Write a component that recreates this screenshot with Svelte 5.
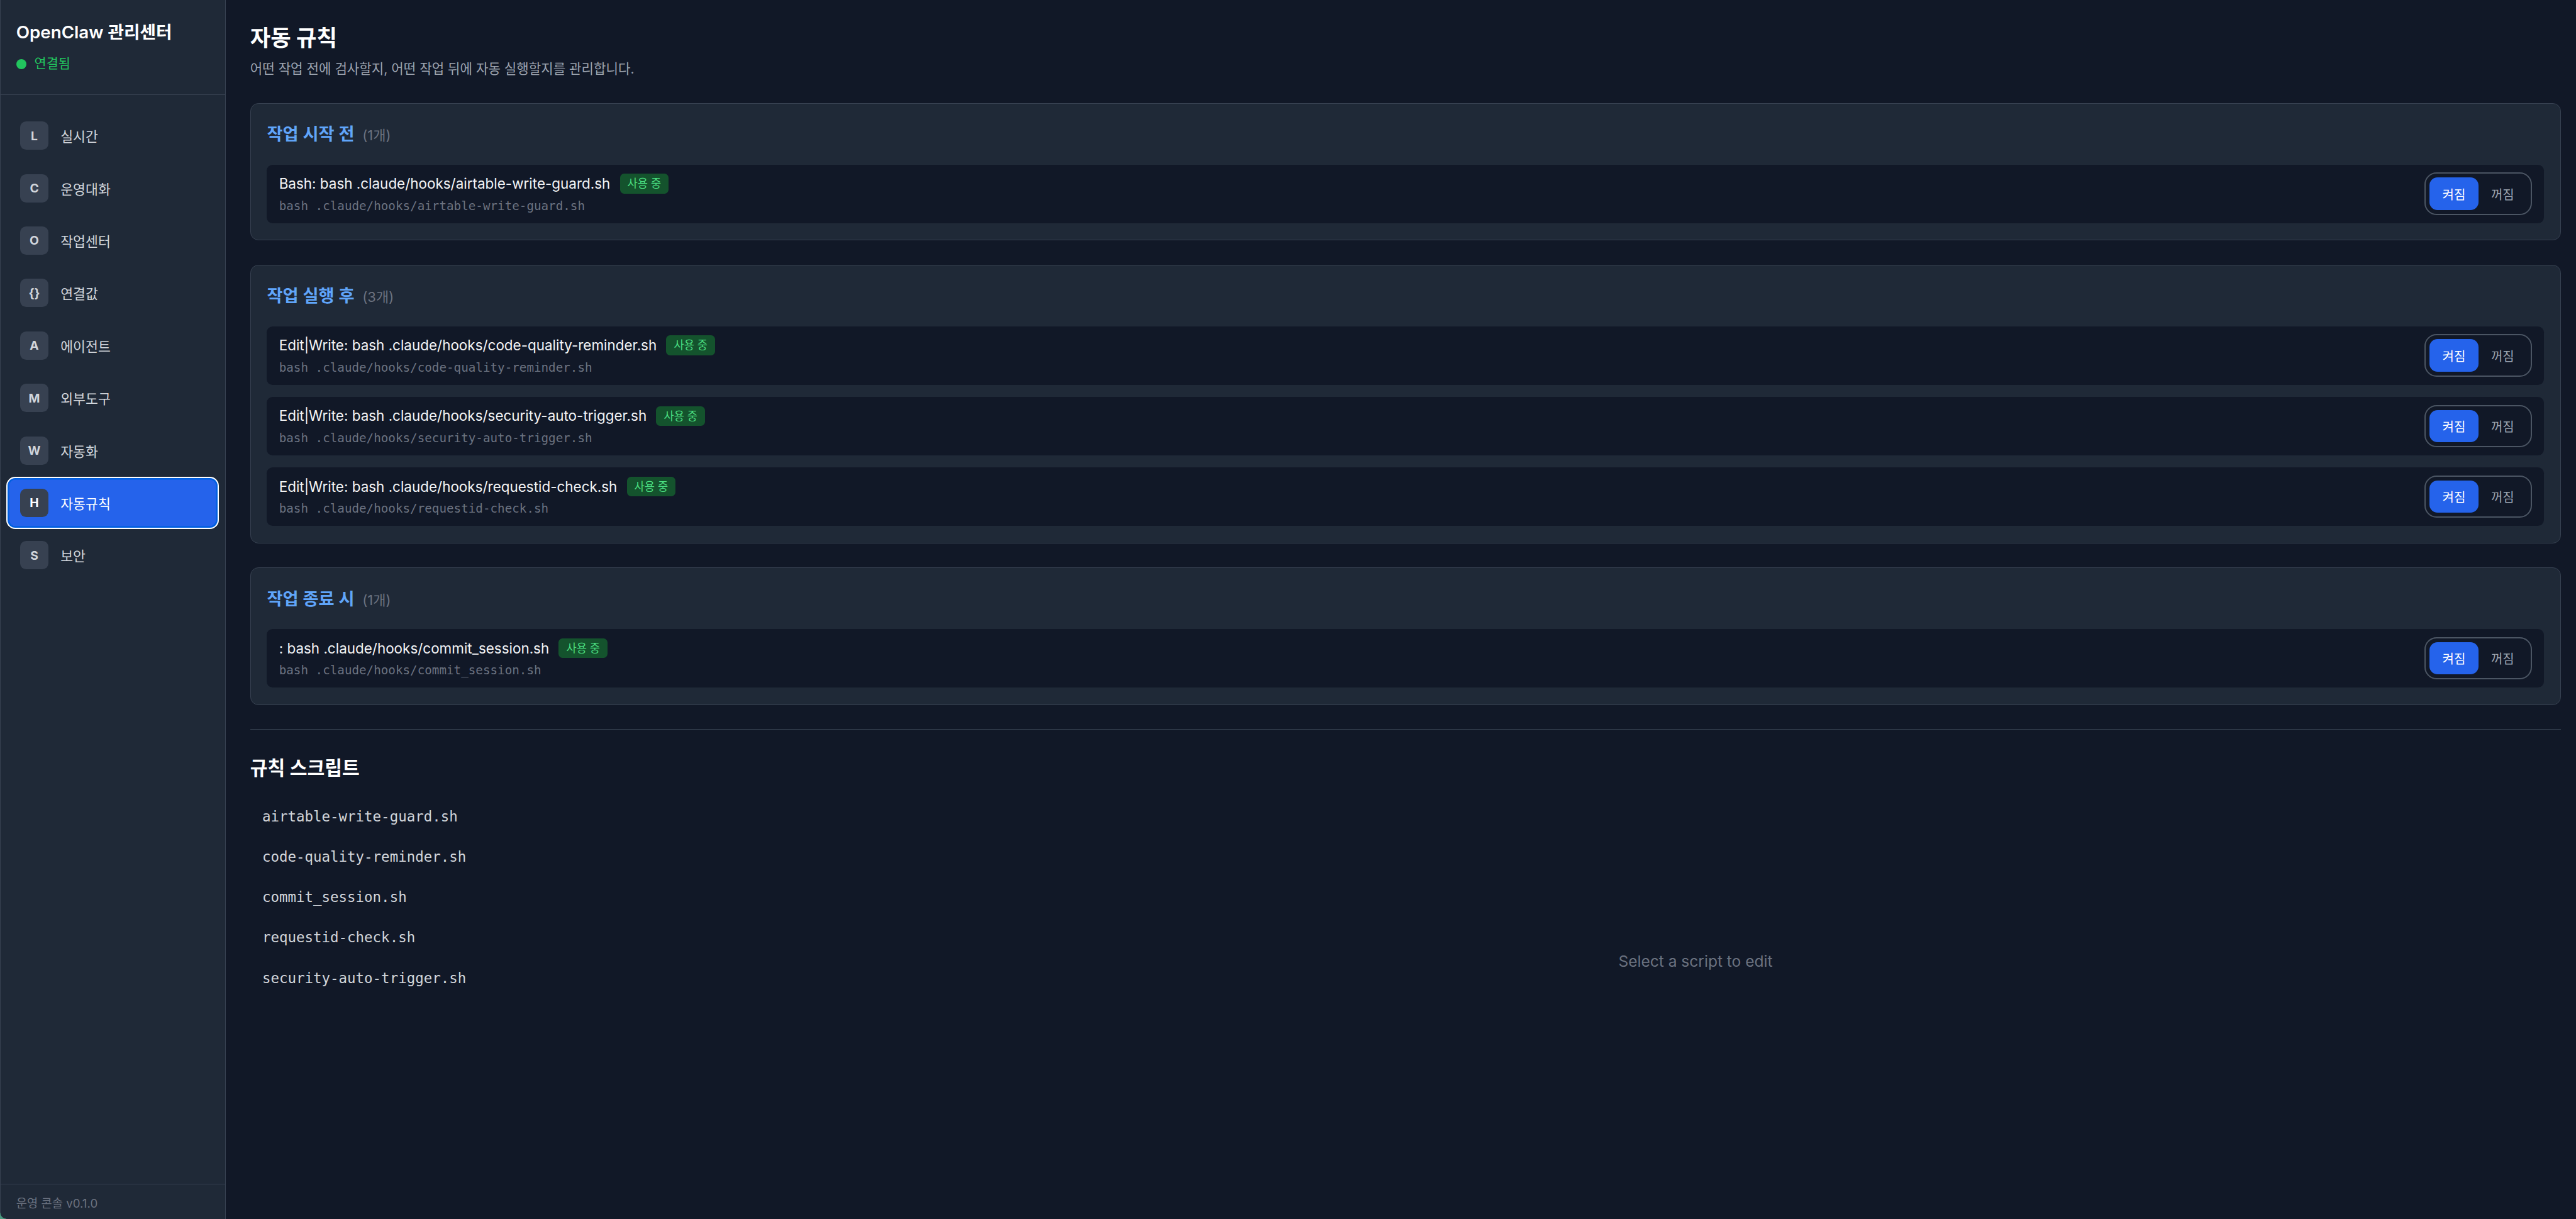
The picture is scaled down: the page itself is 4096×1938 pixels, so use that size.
<script>
	const groups = [
		{
			title: '작업 시작 전',
			rules: [{ matcher: 'Bash', file: 'airtable-write-guard.sh' }]
		},
		{
			title: '작업 실행 후',
			rules: [
				{ matcher: 'Edit|Write', file: 'code-quality-reminder.sh' },
				{ matcher: 'Edit|Write', file: 'security-auto-trigger.sh' },
				{ matcher: 'Edit|Write', file: 'requestid-check.sh' }
			]
		},
		{
			title: '작업 종료 시',
			rules: [{ matcher: '', file: 'commit_session.sh' }]
		}
	];

	const nav = [
		['L', '실시간'],
		['C', '운영대화'],
		['O', '작업센터'],
		['{}', '연결값'],
		['A', '에이전트'],
		['M', '외부도구'],
		['W', '자동화'],
		['H', '자동규칙'],
		['S', '보안']
	];

	const scripts = [
		'airtable-write-guard.sh',
		'code-quality-reminder.sh',
		'commit_session.sh',
		'requestid-check.sh',
		'security-auto-trigger.sh'
	];
</script>

<div class="app">
	<aside class="sidebar">
		<div class="brand">
			<h1>OpenClaw 관리센터</h1>
			<div class="status"><span class="dot"></span>연결됨</div>
		</div>
		<nav>
			{#each nav as [key, label]}
				<button class="nav-item" class:active={key === 'H'}>
					<span class="nav-key">{key}</span>
					<span>{label}</span>
				</button>
			{/each}
		</nav>
		<div class="version">운영 콘솔 v0.1.0</div>
	</aside>

	<main>
		<h2 class="page-title">자동 규칙</h2>
		<p class="subtitle">어떤 작업 전에 검사할지, 어떤 작업 뒤에 자동 실행할지를 관리합니다.</p>

		{#each groups as group}
			<section class="card">
				<div class="card-head">
					<h3>{group.title}</h3>
					<span class="count">({group.rules.length}개)</span>
				</div>
				<div class="rules">
					{#each group.rules as rule}
						<div class="rule">
							<div class="rule-info">
								<div class="rule-name">
									<span>{rule.matcher}: bash .claude/hooks/{rule.file}</span>
									<span class="badge">사용 중</span>
								</div>
								<div class="rule-cmd">bash .claude/hooks/{rule.file}</div>
							</div>
							<div class="toggle">
								<button class="on">켜짐</button>
								<button>꺼짐</button>
							</div>
						</div>
					{/each}
				</div>
			</section>
		{/each}

		<hr />

		<h2 class="section-title">규칙 스크립트</h2>
		<div class="scripts">
			<ul>
				{#each scripts as name}
					<li>{name}</li>
				{/each}
			</ul>
			<div class="editor-empty">Select a script to edit</div>
		</div>
	</main>

	<span class="corner"></span>
</div>

<style>
	:global(body) {
		margin: 0;
		background: #111827;
	}
	.app {
		zoom: 1.604;
		position: relative;
		display: flex;
		height: 1208.2px;
		overflow: hidden;
		background: #111827;
		color: #f3f4f6;
		font-family: Inter, 'Noto Sans CJK KR', sans-serif;
	}
	.corner {
		position: absolute;
		left: 0;
		bottom: 0;
		width: 6px;
		height: 6px;
		background: radial-gradient(circle at 100% 0, transparent 5.6px, #4a9a80 6.2px);
	}
	.sidebar {
		width: 224px;
		flex: none;
		box-sizing: border-box;
		display: flex;
		flex-direction: column;
		background: #1f2937;
		border-right: 1px solid #374151;
		box-shadow: inset 0.65px 0 0 #374151;
	}
	.brand {
		height: 94px;
		box-sizing: border-box;
		padding: 20px 16px 0;
		border-bottom: 1px solid #374151;
	}
	h1 {
		margin: 0;
		font-size: 17.3px;
		line-height: 24px;
		font-weight: 600;
		color: #fff;
	}
	.status {
		display: flex;
		align-items: center;
		gap: 8px;
		margin-top: 10.5px;
		font-size: 13px;
		line-height: 18px;
		color: #22c55e;
	}
	.dot {
		width: 10px;
		height: 10px;
		border-radius: 50%;
		background: #22c55e;
	}
	nav {
		flex: 1;
		display: flex;
		flex-direction: column;
		gap: 4px;
		padding: 16.5px 8px 0;
	}
	.nav-item {
		display: flex;
		align-items: center;
		gap: 12px;
		height: 48px;
		padding: 0 12px;
		border: 0;
		border-radius: 7px;
		background: none;
		color: #d1d5db;
		font: inherit;
		font-size: 13.5px;
		text-align: left;
	}
	.nav-item.active {
		background: #2563eb;
		color: #fff;
		box-shadow: 0 0 0 1px #0060df, inset 0 0 0 1px #0060df;
		outline: 1.25px solid #fff;
		outline-offset: 1px;
	}
	.nav-key {
		width: 28px;
		height: 28px;
		display: flex;
		align-items: center;
		justify-content: center;
		border-radius: 6px;
		background: #374151;
		color: #d1d5db;
		font-size: 12px;
		font-weight: 700;
	}
	.active .nav-key {
		color: #fff;
	}
	.version {
		height: 35px;
		box-sizing: border-box;
		padding: 11px 16px 0;
		border-top: 1px solid #374151;
		font-size: 11.7px;
		line-height: 18px;
		color: #6b7280;
	}
	main {
		flex: 1;
		min-width: 0;
		padding: 24px 15px 0 24px;
	}
	.page-title {
		margin: 0;
		font-size: 22px;
		line-height: 29px;
		font-weight: 700;
		color: #fff;
	}
	.subtitle {
		margin: 5px 0 0;
		font-size: 13.2px;
		line-height: 20px;
		color: #9ca3af;
	}
	.card {
		margin-top: 24px;
		box-sizing: border-box;
		padding: 16px 16px 16.5px;
		background: #1f2937;
		border: 1px solid #374151;
		border-radius: 8px;
	}
	.card-head {
		display: flex;
		align-items: baseline;
		gap: 8px;
		height: 44.5px;
	}
	h3 {
		margin: 0;
		font-size: 17px;
		line-height: 30px;
		font-weight: 600;
		color: #60a5fa;
	}
	.count {
		font-size: 13.7px;
		color: #6b7280;
	}
	.rules {
		display: flex;
		flex-direction: column;
		gap: 12px;
	}
	.rule {
		height: 58px;
		box-sizing: border-box;
		display: flex;
		align-items: center;
		justify-content: space-between;
		padding: 0 12px;
		background: #111827;
		border-radius: 6px;
	}
	.rule-name {
		display: flex;
		align-items: center;
		gap: 9.5px;
		font-size: 14px;
		line-height: 20px;
		font-weight: 400;
		color: #f3f4f6;
	}
	.badge {
		padding: 0 7.5px;
		height: 19.5px;
		line-height: 19.5px;
		border-radius: 4px;
		background: #14532d;
		color: #4ade80;
		font-size: 11px;
		font-weight: 400;
	}
	.rule-cmd {
		margin-top: 4px;
		font-family: 'DejaVu Sans Mono', monospace;
		font-size: 12px;
		line-height: 16px;
		color: #6b7280;
	}
	.toggle {
		display: flex;
		box-sizing: border-box;
		width: 106.5px;
		height: 42px;
		padding: 3.75px;
		border: 1.25px solid #4b5563;
		border-radius: 12px;
	}
	.toggle button {
		width: 48.5px;
		height: 32px;
		padding: 0;
		border: 0;
		border-radius: 8px;
		background: none;
		color: #9ca3af;
		font: inherit;
		font-size: 12.5px;
	}
	.toggle .on {
		background: #2563eb;
		color: #fff;
	}
	hr {
		margin: 24px 0 0;
		border: 0;
		border-top: 1px solid #374151;
	}
	.section-title {
		margin: 26px 0 0;
		font-size: 18.8px;
		line-height: 24px;
		font-weight: 600;
		color: #fff;
	}
	.scripts {
		display: grid;
		grid-template-columns: 575px 1fr;
		margin-top: 16px;
	}
	ul {
		margin: 0;
		padding: 0;
		list-style: none;
	}
	li {
		height: 40px;
		line-height: 40px;
		padding-left: 12px;
		font-family: 'DejaVu Sans Mono', monospace;
		font-size: 14px;
		color: #d1d5db;
	}
	.editor-empty {
		height: 327px;
		display: flex;
		align-items: center;
		justify-content: center;
		font-size: 15.3px;
		color: #6b7280;
	}
</style>
